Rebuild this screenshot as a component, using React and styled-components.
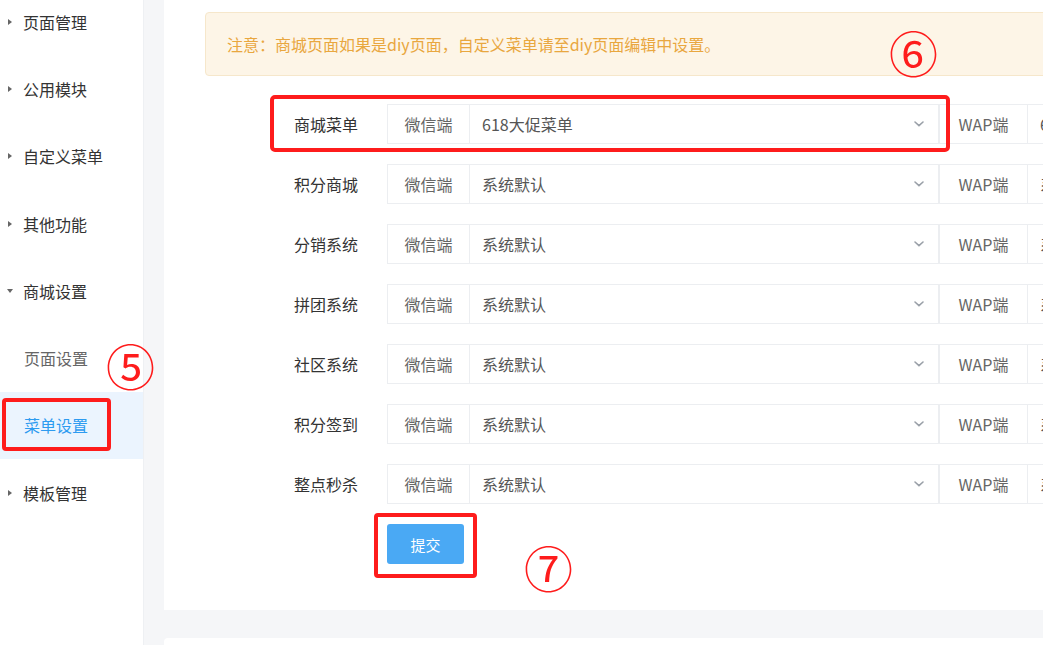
import React from "react";
import styled, { createGlobalStyle } from "styled-components";

const GlobalStyle = createGlobalStyle`
  html, body {
    margin: 0;
    padding: 0;
    background: #f5f6f8;
    font-family: "Noto Sans CJK SC", "Microsoft YaHei", sans-serif;
  }
`;

const MENU = [
  { name: "页面管理" },
  { name: "公用模块" },
  { name: "自定义菜单" },
  { name: "其他功能" },
  { name: "商城设置", open: true },
  { name: "页面设置", sub: true },
  { name: "菜单设置", sub: true, active: true },
  { name: "模板管理" },
];

const ROWS = [
  { label: "商城菜单", value: "618大促菜单", mark: true },
  { label: "积分商城", value: "系统默认" },
  { label: "分销系统", value: "系统默认" },
  { label: "拼团系统", value: "系统默认" },
  { label: "社区系统", value: "系统默认" },
  { label: "积分签到", value: "系统默认" },
  { label: "整点秒杀", value: "系统默认" },
];

const Chevron = () => (
  <svg width="12" height="8" viewBox="0 0 12 8">
    <path d="M2 2l4 3.6L10 2" fill="none" stroke="#9aa0a8" strokeWidth="1.6" strokeLinecap="round" />
  </svg>
);

const App = () => {
  return (
    <>
      <GlobalStyle />
      <Layout>
        <Sidebar>
          {MENU.map((m) => (
            <MenuItem key={m.name} $sub={m.sub} $active={m.active}>
              {!m.sub && <Caret $open={m.open} />}
              <span>{m.name}</span>
              {m.active && <MarkBox />}
            </MenuItem>
          ))}
        </Sidebar>
        <Main>
          <Card>
            <Alert>注意：商城页面如果是diy页面，自定义菜单请至diy页面编辑中设置。</Alert>
            <Form>
              {ROWS.map((r) => (
                <FormRow key={r.label}>
                  <Label>{r.label}</Label>
                  <Group>
                    <Prepend $w={82}>微信端</Prepend>
                    <Select $w={470}>
                      <span>{r.value}</span>
                      <Chevron />
                    </Select>
                    <Prepend $w={88}>WAP端</Prepend>
                    <Select $w={300}>
                      <span>{r.value}</span>
                      <Chevron />
                    </Select>
                  </Group>
                  {r.mark && <RowMark />}
                </FormRow>
              ))}
              <ButtonRow>
                <SubmitWrap>
                  <Submit>提交</Submit>
                  <ButtonMark />
                </SubmitWrap>
              </ButtonRow>
            </Form>
            <Circled $left={725} $top={27}>⑥</Circled>
            <Circled $left={360} $top={542}>⑦</Circled>
          </Card>
          <NextCard />
        </Main>
        <Circled $left={106} $top={340}>⑤</Circled>
      </Layout>
    </>
  );
};

const Layout = styled.div`
  position: relative;
  display: flex;
  width: 1043px;
  height: 645px;
  overflow: hidden;
`;

const Sidebar = styled.div`
  width: 143px;
  flex-shrink: 0;
  background: #fff;
  border-right: 1px solid #eef0f3;
  margin-top: -12px;
`;

const MenuItem = styled.div`
  position: relative;
  display: flex;
  align-items: center;
  height: 67.3px;
  padding-left: ${(p) => (p.$sub ? "24px" : "8px")};
  font-size: 16px;
  color: ${(p) => (p.$active ? "#2d9bf0" : p.$sub ? "#666" : "#333")};
  background: ${(p) => (p.$active ? "#ebf4fe" : "transparent")};
`;

const Caret = styled.i`
  width: 0;
  height: 0;
  margin-right: 11px;
  ${(p) =>
    p.$open
      ? `border-left: 3.5px solid transparent;
         border-right: 3.5px solid transparent;
         border-top: 4px solid #666;
         margin-left: -1px;
         margin-right: 10px;`
      : `border-top: 3.5px solid transparent;
         border-bottom: 3.5px solid transparent;
         border-left: 4px solid #666;`}
`;

const MarkBox = styled.div`
  position: absolute;
  left: 2px;
  top: 6px;
  width: 109px;
  height: 53px;
  box-sizing: border-box;
  border: 4px solid #fe1c1c;
  border-radius: 4px;
`;

const Main = styled.div`
  flex: 1;
  padding-left: 20px;
  background: #f5f6f8;
  min-width: 0;
`;

const Card = styled.div`
  position: relative;
  height: 610px;
  box-sizing: border-box;
  background: #fff;
  padding: 12px 0 0 41px;
  overflow: hidden;
`;

const NextCard = styled.div`
  margin-top: 28px;
  height: 40px;
  background: #fff;
  border-radius: 4px 0 0 0;
`;

const Alert = styled.div`
  height: 64px;
  box-sizing: border-box;
  width: 900px;
  display: flex;
  align-items: center;
  padding-left: 21px;
  background: #fdf5e7;
  border: 1px solid #f6e7cb;
  border-radius: 4px;
  font-size: 16px;
  color: #e9a73f;
`;

const Form = styled.div`
  padding-top: 28px;
`;

const FormRow = styled.div`
  position: relative;
  display: flex;
  align-items: center;
  height: 40px;
  margin-bottom: 20px;
`;

const Label = styled.div`
  width: 182px;
  flex-shrink: 0;
  box-sizing: border-box;
  padding-right: 29px;
  text-align: right;
  font-size: 16px;
  color: #333;
`;

const Group = styled.div`
  display: flex;
  height: 40px;
  flex-shrink: 0;
`;

const Prepend = styled.div`
  width: ${(p) => p.$w}px;
  box-sizing: border-box;
  display: flex;
  align-items: center;
  justify-content: center;
  border: 1px solid #eceef1;
  border-right: none;
  font-size: 16px;
  color: #666;
  background: #fff;
`;

const Select = styled.div`
  width: ${(p) => p.$w}px;
  box-sizing: border-box;
  display: flex;
  align-items: center;
  justify-content: space-between;
  padding: 0 12px;
  border: 1px solid #eceef1;
  font-size: 16px;
  color: #555;

  svg {
    margin-right: 1px;
  }
`;

const RowMark = styled.div`
  position: absolute;
  left: 65px;
  top: -9px;
  width: 680px;
  height: 57px;
  box-sizing: border-box;
  border: 4px solid #fe1c1c;
  border-radius: 5px;
  pointer-events: none;
`;

const ButtonRow = styled.div`
  padding-left: 182px;
`;

const SubmitWrap = styled.div`
  position: relative;
  display: inline-block;
`;

const Submit = styled.button`
  width: 77px;
  height: 40px;
  border: none;
  border-radius: 3px;
  background: #4aa9f4;
  color: #fff;
  font-family: inherit;
  font-size: 15px;
  cursor: pointer;
`;

const ButtonMark = styled.div`
  position: absolute;
  left: -13px;
  top: -11px;
  width: 103px;
  height: 65px;
  box-sizing: border-box;
  border: 4px solid #fe1c1c;
  border-radius: 4px;
`;

const Circled = styled.div`
  position: absolute;
  left: ${(p) => p.$left}px;
  top: ${(p) => p.$top}px;
  font-family: "Noto Sans CJK SC", sans-serif;
  font-size: 49px;
  font-weight: 400;
  line-height: 1;
  color: #fe1c1c;
`;

export default App;
